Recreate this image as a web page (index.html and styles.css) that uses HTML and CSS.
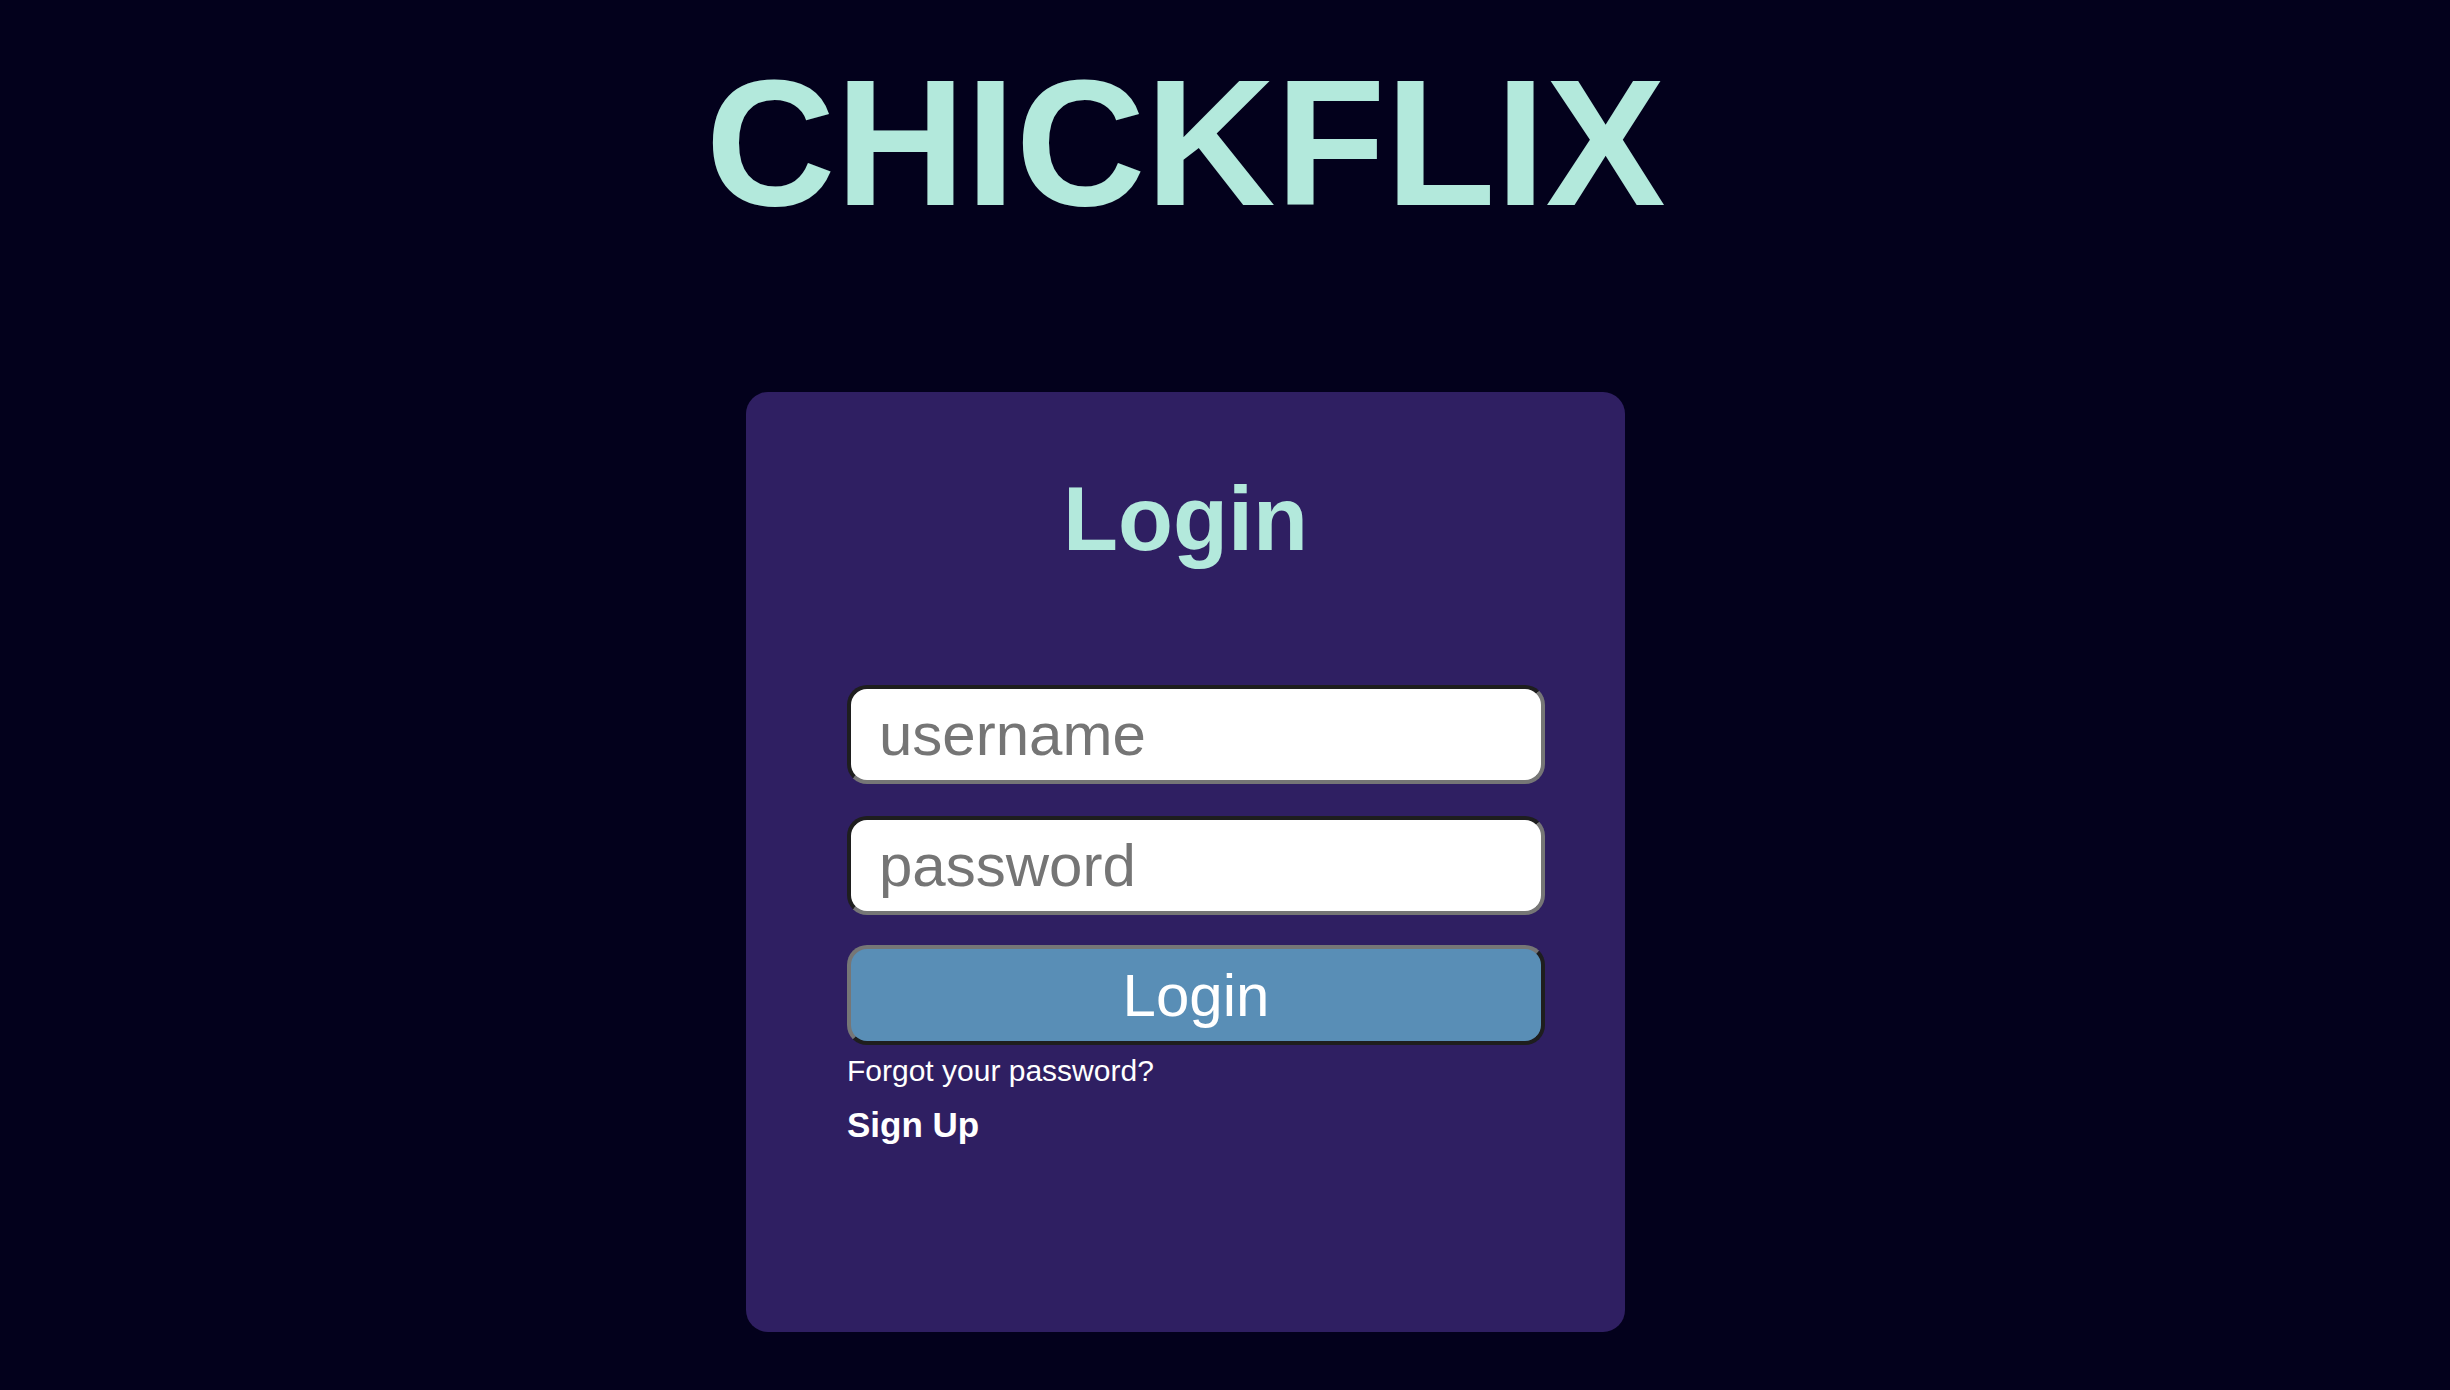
FILE: index.html
```html
<!DOCTYPE html>
<html lang="en">
<head>
<meta charset="utf-8">
<title>Chickflix - Login</title>
<link rel="stylesheet" href="styles.css">
</head>
<body>
<div class="page">
  <h1 class="brand">CHICKFLIX</h1>
  <div class="card">
    <h2 class="card-title">Login</h2>
    <form class="login-form">
      <input class="field field-user" type="text" placeholder="username">
      <input class="field field-pass" type="password" placeholder="password">
      <button class="submit" type="button">Login</button>
      <a class="forgot" href="#">Forgot your password?</a>
      <a class="signup" href="#">Sign Up</a>
    </form>
  </div>
</div>
</body>
</html>
```
FILE: styles.css
```css
html, body {
  margin: 0;
  padding: 0;
}
body {
  background: #03011c;
  font-family: "Liberation Sans", Arial, Helvetica, sans-serif;
  min-height: 1390px;
}
.page {
  width: 2371px;
  display: flex;
  flex-direction: column;
  align-items: center;
}
.brand {
  margin: 39px 0 0;
  font-size: 180px;
  line-height: 207px;
  font-weight: 700;
  color: #b3e9dc;
  letter-spacing: 0;
}
.card {
  margin-top: 146px;
  width: 879px;
  height: 940px;
  box-sizing: border-box;
  background: #2f1f62;
  border-radius: 22px;
  padding-top: 75px;
}
.card-title {
  margin: 0;
  text-align: center;
  font-size: 90px;
  line-height: 104px;
  font-weight: 700;
  color: #b3e9dc;
}
.login-form {
  margin: 114px 0 0 101px;
  width: 698px;
  display: flex;
  flex-direction: column;
  align-items: flex-start;
}
.field {
  box-sizing: border-box;
  width: 698px;
  height: 99px;
  margin: 0;
  padding: 0 20px 0 28px;
  border: 4px solid;
  border-color: #1e1e1e #767676 #767676 #1e1e1e;
  border-radius: 20px;
  background: #ffffff;
  font-family: "Liberation Sans", Arial, Helvetica, sans-serif;
  font-size: 60px;
  color: #222;
  outline: none;
}
.field::placeholder {
  color: #757575;
  opacity: 1;
}
.field-pass {
  margin-top: 32px;
}
.submit {
  box-sizing: border-box;
  width: 698px;
  height: 100px;
  margin: 30px 0 0;
  padding: 0;
  border: 4px solid;
  border-color: #767676 #1e1e1e #1e1e1e #767676;
  border-radius: 20px;
  background: #598eb6;
  color: #ffffff;
  font-family: "Liberation Sans", Arial, Helvetica, sans-serif;
  font-size: 60px;
  cursor: pointer;
}
.forgot {
  margin-top: 8px;
  font-size: 30px;
  line-height: 35px;
  color: #ffffff;
  text-decoration: none;
}
.signup {
  margin-top: 17px;
  font-size: 35px;
  line-height: 40px;
  font-weight: 700;
  color: #ffffff;
  text-decoration: none;
}
```
